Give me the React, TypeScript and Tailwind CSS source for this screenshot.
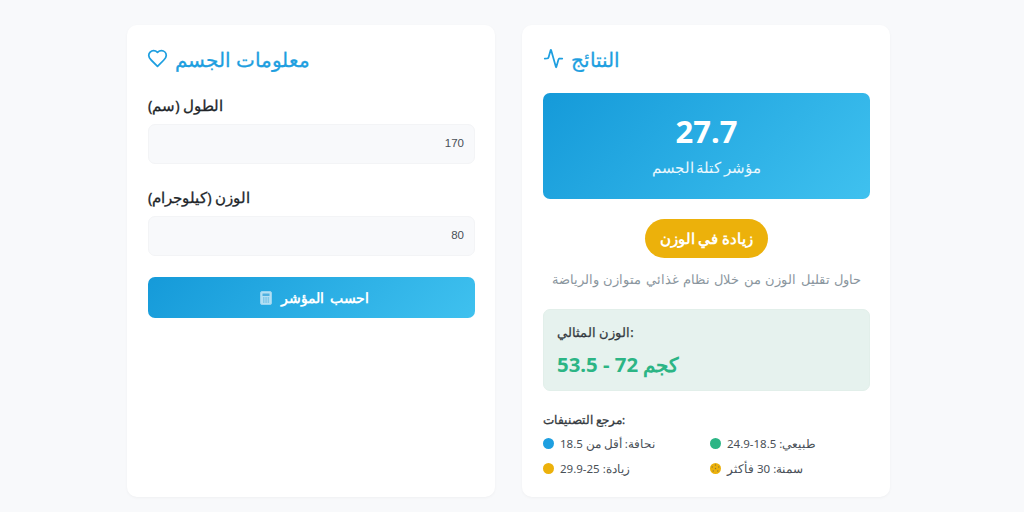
import React from "react";

const font = { fontFamily: '"Noto Sans", sans-serif' };

function Legend({ color, text, dotted }: { color: string; text: string; dotted?: boolean }) {
  return (
    <div className="flex items-center gap-[6px] h-[25px]">
      {dotted ? (
        <svg width="11" height="11" viewBox="0 0 11 11">
          <circle cx="5.5" cy="5.5" r="5.5" fill="#ecb10b" />
          <g fill="#8c7a3a">
            <circle cx="5.5" cy="2" r="0.7" />
            <circle cx="2.2" cy="4" r="0.7" />
            <circle cx="8.8" cy="4" r="0.7" />
            <circle cx="3.2" cy="8" r="0.7" />
            <circle cx="7.8" cy="8" r="0.7" />
            <circle cx="5.5" cy="5.5" r="0.7" />
          </g>
        </svg>
      ) : (
        <span className={`w-[11px] h-[11px] rounded-full ${color}`} />
      )}
      <span className="text-[11.5px] text-[#495057] leading-[25px]">{text}</span>
    </div>
  );
}

function Field({ label, value, mt }: { label: string; value: string; mt: string }) {
  return (
    <div className={mt}>
      <div className="text-[14.5px] font-normal text-[#212529] leading-[22px] [-webkit-text-stroke:0.3px_#212529]">{label}</div>
      <div className="mt-[8px] h-[40px] rounded-[7px] bg-[#f8f9fb] border border-[#f3f4f6] flex items-center justify-end px-[10px] text-[11.5px] text-[#495057] font-['Liberation_Sans',sans-serif]">
        {value}
      </div>
    </div>
  );
}

export default function App() {
  return (
    <div className="w-[1024px] h-[512px] bg-[#f8f9fb] pt-[25px] pl-[127px] overflow-hidden" style={font}>
      <div className="w-[763px] h-[472px] grid grid-cols-[368px_368px] grid-rows-[472px] gap-[27px]">
        <section className="bg-white rounded-[10px] shadow-[0_1px_3px_rgba(0,0,0,0.04)] pl-[21px] pr-[20px] pt-[20px]">
          <h2 className="flex items-center gap-[7px] h-[29px] text-[20.4px] font-normal text-[#1e9fe0] [-webkit-text-stroke:0.3px_#1e9fe0]">
            <svg width="21" height="21" viewBox="0 0 24 24" fill="none" stroke="#1e9fe0" strokeWidth="2" strokeLinecap="round" strokeLinejoin="round" className="-ml-[1px] -mt-[3px]">
              <path d="M19 14c1.49-1.46 3-3.21 3-5.5A5.5 5.5 0 0 0 16.5 3c-1.76 0-3 .5-4.5 2-1.5-1.5-2.74-2-4.5-2A5.5 5.5 0 0 0 2 8.5c0 2.3 1.5 4.05 3 5.5l7 7Z" />
            </svg>
            <span>معلومات الجسم</span>
          </h2>
          <Field label="الطول (سم)" value="170" mt="mt-[20px]" />
          <Field label="الوزن (كيلوجرام)" value="80" mt="mt-[22px]" />
          <button className="mt-[21px] w-full h-[41px] rounded-[7px] bg-[linear-gradient(135deg,#159ad9,#3fc1ef)] text-white text-[14px] font-semibold [word-spacing:2px] flex items-center justify-center gap-[9px] pl-[6px]">
            <svg width="12" height="14" viewBox="0 0 12 14" className="opacity-80">
              <rect x="0.5" y="0.5" width="11" height="13" rx="1.5" fill="#d8eef9" stroke="#b5dff4" />
              <rect x="2.5" y="2.5" width="7" height="2.5" fill="#5cb3df" />
              <path d="M3 7h1.5M5.3 7h1.5M7.6 7h1.5M3 9h1.5M5.3 9h1.5M7.6 9h1.5M3 11h1.5M5.3 11h1.5M7.6 11h1.5" stroke="#5cb3df" strokeWidth="1.2" />
            </svg>
            <span>احسب المؤشر</span>
          </button>
        </section>

        <section className="bg-white rounded-[10px] shadow-[0_1px_3px_rgba(0,0,0,0.04)] pl-[21px] pr-[20px] pt-[20px]">
          <h2 className="flex items-center gap-[7px] h-[29px] text-[20.4px] font-normal text-[#1e9fe0] [-webkit-text-stroke:0.3px_#1e9fe0]">
            <svg width="21" height="21" viewBox="0 0 24 24" fill="none" stroke="#1e9fe0" strokeWidth="2" strokeLinecap="round" strokeLinejoin="round" className="-mt-[3px]">
              <path d="M22 12h-2.48a2 2 0 0 0-1.93 1.46l-2.35 8.36a.25.25 0 0 1-.48 0L9.24 2.18a.25.25 0 0 0-.48 0l-2.35 8.36A2 2 0 0 1 4.49 12H2" />
            </svg>
            <span>النتائج</span>
          </h2>
          <div className="mt-[19px] h-[106px] rounded-[7px] bg-[linear-gradient(135deg,#159ad9,#3fc1ef)] text-white flex flex-col items-center">
            <div className="mt-[18px] text-[31px] font-bold leading-[40px]">27.7</div>
            <div className="mt-[4px] text-[14.5px] leading-[24px] text-white/90 [word-spacing:-1px]">مؤشر كتلة الجسم</div>
          </div>
          <div className="mt-[20px] flex justify-center">
            <div className="h-[39px] w-[123px] rounded-full bg-[#ecb10b] text-white text-[14.5px] font-semibold flex items-center justify-center">زيادة في الوزن</div>
          </div>
          <p className="mt-[10px] text-center text-[13.3px] leading-[22px] text-[#8a969e] [word-spacing:1px]">حاول تقليل الوزن من خلال نظام غذائي متوازن والرياضة</p>
          <div className="mt-[19px] h-[82px] rounded-[7px] bg-[#e6f2ee] border border-[#e2efea] px-[13px] pt-[10px]">
            <div className="text-[12.8px] font-normal text-[#343a40] leading-[24px] [-webkit-text-stroke:0.25px_#343a40]">الوزن المثالي:</div>
            <div className="mt-[5px] text-[20.4px] font-bold text-[#2cb585] leading-[30px]">53.5 - 72 كجم</div>
          </div>
          <div className="mt-[19px] text-[11.5px] font-normal text-[#343a40] leading-[20px] [-webkit-text-stroke:0.3px_#343a40]">مرجع التصنيفات:</div>
          <div className="mt-[1px] grid grid-cols-[167px_1fr]">
            <Legend color="bg-[#1e9fe0]" text="نحافة: أقل من 18.5" />
            <Legend color="bg-[#2cb585]" text="طبيعي: 18.5-24.9" />
            <Legend color="bg-[#ecb10b]" text="زيادة: 25-29.9" />
            <Legend color="bg-[#ecb10b]" text="سمنة: 30 فأكثر" dotted />
          </div>
        </section>
      </div>
    </div>
  );
}
